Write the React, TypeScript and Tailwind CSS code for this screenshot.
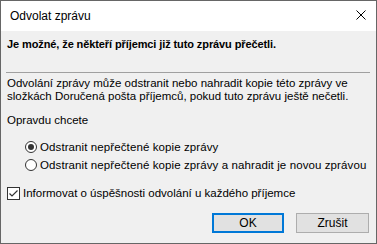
import { useState } from "react";

const font = { fontFamily: '"Liberation Sans", Arial, sans-serif' };

const Radio = ({ checked, label, onClick }: { checked: boolean; label: string; onClick: () => void }) => (
  <div className="flex items-center h-[16px] pl-[18px] cursor-default" onClick={onClick}>
    <span className="w-[12px] h-[12px] rounded-full border border-[#333] bg-white flex items-center justify-center shrink-0">
      {checked && <span className="w-[6px] h-[6px] rounded-full bg-[#333]" />}
    </span>
    <span className="ml-[3px] whitespace-nowrap tracking-[0.1px]">{label}</span>
  </div>
);

export default function App() {
  const [choice, setChoice] = useState(0);
  const [notify, setNotify] = useState(true);

  return (
    <div
      className="w-[377px] h-[244px] border border-[#666] flex flex-col text-[11.5px] leading-[16px] text-black select-none overflow-hidden"
      style={font}
    >
      {/* Title bar */}
      <div className="h-[30px] bg-white flex items-center justify-between pl-[9px] pr-[10px] shrink-0 text-[12px]">
        <span>Odvolat zprávu</span>
        <svg width="10" height="10" viewBox="0 0 10 10" className="mb-[2px]">
          <path d="M0.5 0.5 L9.5 9.5 M9.5 0.5 L0.5 9.5" stroke="#000" strokeWidth="1" />
        </svg>
      </div>

      {/* Body */}
      <div className="flex-1 bg-[#f0f0f0] flex flex-col px-[6px]">
        <div className="mt-[5px] font-bold text-[11px] tracking-[-0.1px]">
          Je možné, že někteří příjemci již tuto zprávu přečetli.
        </div>

        <div className="mt-[20px] ml-[-1px] h-[1px] bg-[#a0a0a0] w-[364px]" />

        <div className="mt-[4px] leading-[13px] whitespace-nowrap">
          Odvolání zprávy může odstranit nebo nahradit kopie této zprávy ve
          <br />
          složkách Doručená pošta příjemců, pokud tuto zprávu ještě nečetli.
        </div>

        <div className="mt-[9px]">Opravdu chcete</div>

        <div className="mt-[11px] flex flex-col gap-[2px]">
          <Radio checked={choice === 0} label="Odstranit nepřečtené kopie zprávy" onClick={() => setChoice(0)} />
          <Radio
            checked={choice === 1}
            label="Odstranit nepřečtené kopie zprávy a nahradit je novou zprávou"
            onClick={() => setChoice(1)}
          />
        </div>

        <div className="mt-[12px] flex items-center h-[16px]" onClick={() => setNotify(!notify)}>
          <span className="w-[13px] h-[13px] border border-[#333] bg-white flex items-center justify-center shrink-0">
            {notify && (
              <svg width="11" height="11" viewBox="0 0 11 11">
                <path d="M1.5 5.5 L4 8 L9.5 2.5" fill="none" stroke="#333" strokeWidth="1.2" />
              </svg>
            )}
          </span>
          <span className="ml-[3px] whitespace-nowrap">Informovat o úspěšnosti odvolání u každého příjemce</span>
        </div>

        <div className="mt-[12px] flex justify-end gap-[12px] pr-[1px]">
          <button className="w-[72px] h-[20px] bg-[#e1e1e1] border-2 border-[#0078d7] text-[12px] leading-[16px]">
            OK
          </button>
          <button className="w-[73px] h-[20px] bg-[#e1e1e1] border border-[#adadad] text-[12px] leading-[16px]">
            Zrušit
          </button>
        </div>
      </div>
    </div>
  );
}
